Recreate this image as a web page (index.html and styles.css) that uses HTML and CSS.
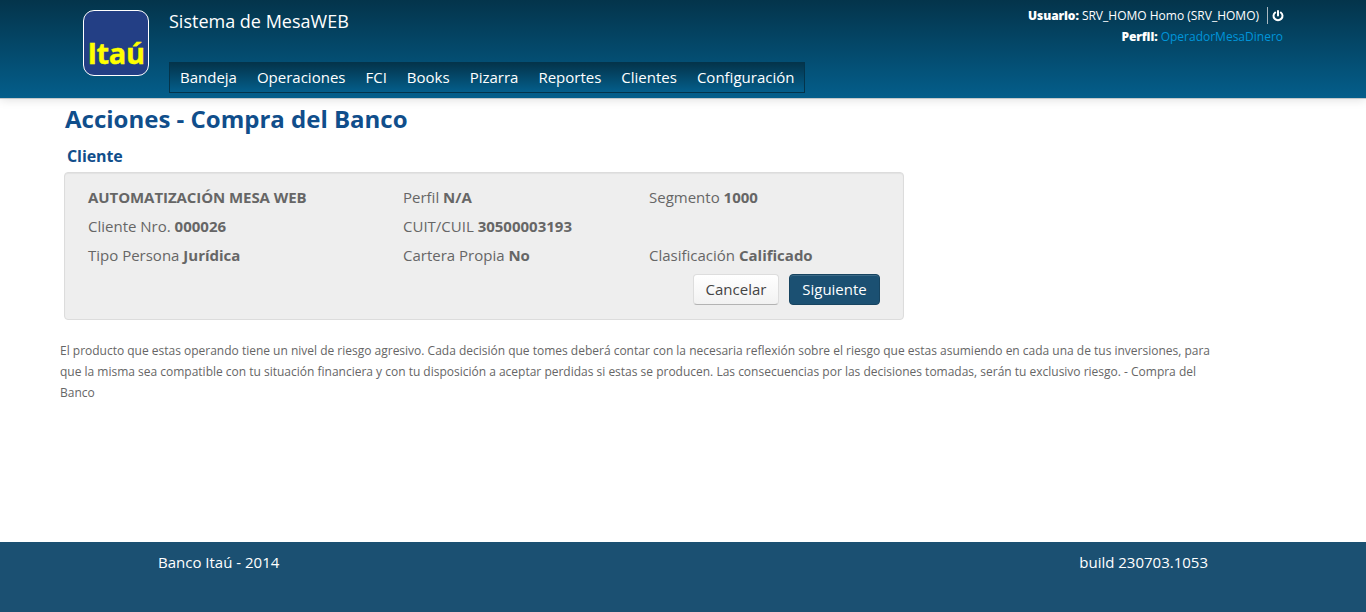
FILE: index.html
```html
<!DOCTYPE html>
<html lang="es">
<head>
<meta charset="utf-8">
<title>Sistema de MesaWEB</title>
<link rel="stylesheet" href="styles.css">
</head>
<body>
<header class="header">
  <div class="logo"><span class="logo-text">Itaú</span></div>
  <div class="brand">
    <div class="app-name">Sistema de MesaWEB</div>
    <nav class="nav">
      <a>Bandeja</a><a>Operaciones</a><a>FCI</a><a>Books</a><a>Pizarra</a><a>Reportes</a><a>Clientes</a><a>Configuración</a>
    </nav>
  </div>
  <div class="user">
    <div class="user-row"><span><b>Usuario:</b> SRV_HOMO Homo (SRV_HOMO)</span><span class="logout"><svg width="12" height="12" viewBox="0 0 12 12" fill="none" stroke="#fff" stroke-width="2" stroke-linecap="round"><path d="M3.2 2.5A4.5 4.3 0 1 0 8.8 2.5M6 1.1V5.4"/></svg></span></div>
    <div class="user-row"><span><b>Perfil:</b> <a class="profile">OperadorMesaDinero</a></span></div>
  </div>
</header>
<main class="main">
  <h1 class="title">Acciones - Compra del Banco</h1>
  <h2 class="subtitle">Cliente</h2>
  <section class="card">
    <div class="grid">
      <div><b class="client-name">AUTOMATIZACIÓN MESA WEB</b></div><div>Perfil <b>N/A</b></div><div>Segmento <b>1000</b></div>
      <div>Cliente Nro. <b>000026</b></div><div>CUIT/CUIL <b>30500003193</b></div><div></div>
      <div>Tipo Persona <b>Jurídica</b></div><div>Cartera Propia <b>No</b></div><div>Clasificación <b>Calificado</b></div>
    </div>
    <div class="actions"><button class="btn">Cancelar</button><button class="btn btn-primary">Siguiente</button></div>
  </section>
  <p class="notice">El producto que estas operando tiene un nivel de riesgo agresivo. Cada decisión que tomes deberá contar con la necesaria reflexión sobre el riesgo que estas asumiendo en cada una de tus inversiones, para<br>que la misma sea compatible con tu situación financiera y con tu disposición a aceptar perdidas si estas se producen. Las consecuencias por las decisiones tomadas, serán tu exclusivo riesgo. - Compra del<br>Banco</p>
</main>
<footer class="footer"><span>Banco Itaú - 2014</span><span>build 230703.1053</span></footer>
</body>
</html>
```
FILE: styles.css
```css
* { box-sizing: border-box; }
body {
  margin: 0;
  height: 612px;
  display: flex;
  flex-direction: column;
  overflow: hidden;
  background: #fff;
  color: #666;
  font: 15px/21px "Open Sans", sans-serif;
}
.header {
  height: 98px;
  flex: none;
  display: flex;
  align-items: flex-start;
  padding: 0 83px;
  color: #fff;
  background: linear-gradient(#04344b, #045e8b);
  box-shadow: 0 1px 0 #c4c8ca, 0 1px 10px rgba(0, 0, 0, .15);
}
.logo {
  width: 66px;
  height: 66px;
  margin: 10px 20px 0 0;
  border: 1px solid #fff;
  border-radius: 11px;
  background: #233f85;
  display: flex;
  align-items: flex-end;
  justify-content: center;
  padding-bottom: 7px;
}
.logo-text {
  color: #ff0;
  font-size: 29px;
  line-height: 30px;
  font-weight: 700;
  letter-spacing: -.4px;
  -webkit-text-stroke: .4px #ff0;
}
.app-name {
  margin-top: 11px;
  height: 51px;
  font-size: 18px;
  line-height: 21px;
}
.nav {
  display: flex;
  gap: 20px;
  width: 636px;
  height: 31px;
  padding: 0 10px;
  line-height: 29px;
  white-space: nowrap;
  border: 1px solid #04344b;
  background: linear-gradient(#04344b, #045e8b);
}
.user {
  margin-left: auto;
  padding-top: 5px;
  font-size: 12px;
}
.user-row {
  display: flex;
  justify-content: flex-end;
  line-height: 21px;
}
.user-row b { font-weight: 800; letter-spacing: -.1px; }
.logout {
  display: flex;
  align-items: center;
  height: 17px;
  margin: 2px -1px 0 8px;
  padding-left: 4px;
  border-left: 1px solid #a9b8c0;
}
.profile { color: #0095da; }
.main {
  flex: 1;
  padding: 11px 60px 0;
}
.title {
  margin: 0 0 0 5px;
  font-size: 24px;
  line-height: 20px;
  color: #104e8b;
}
.subtitle {
  margin: 17px 0 0 7px;
  font-size: 16px;
  line-height: 20px;
  font-weight: 700;
  letter-spacing: -.1px;
  color: #104e8b;
}
.card {
  width: 840px;
  height: 148px;
  margin: 6px 0 0 4px;
  padding: 10px 23px 0;
  border: 1px solid #dcdcdc;
  border-radius: 4px;
  background: #eee;
  box-shadow: inset 0 1px 1px rgba(0, 0, 0, .05);
}
.grid {
  display: grid;
  grid-template-columns: 315px 246px 1fr;
  grid-auto-rows: 29px;
  line-height: 29px;
}
.client-name { letter-spacing: -.07px; }
.actions {
  display: flex;
  justify-content: flex-end;
  gap: 10px;
  margin-top: 4px;
}
.btn {
  height: 31px;
  width: 86px;
  padding: 0;
  font: 15px/21px "Open Sans", sans-serif;
  color: #444;
  border: 1px solid #ddd;
  border-bottom-color: #b3b3b3;
  border-radius: 4px;
  background: linear-gradient(#fff, #f2f2f2);
}
.btn-primary {
  width: 91px;
  color: #fff;
  border-color: #174460;
  background: #1b5072;
  box-shadow: inset 0 1px 0 rgba(255, 255, 255, .15);
}
.notice {
  margin: 20px 0 0;
  font-size: 12px;
  line-height: 21px;
  letter-spacing: -.005px;
  white-space: nowrap;
}
.footer {
  height: 70px;
  flex: none;
  display: flex;
  justify-content: space-between;
  padding: 10px 158px;
  color: #fff;
  background: #1b5072;
}
```
